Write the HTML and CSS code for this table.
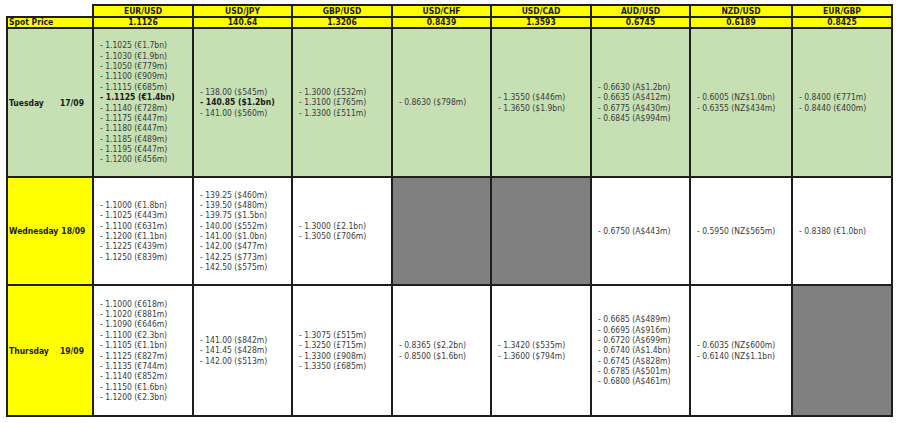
FILE: index.html
```html
<!DOCTYPE html>
<html>
<head>
<meta charset="utf-8">
<link rel="stylesheet" href="styles.css">
</head>
<body>
<table class="fx">
  <colgroup>
    <col class="c-label"><col class="c100"><col class="c99"><col class="c100"><col class="c99"><col class="c100"><col class="c99"><col class="c102"><col class="c100">
  </colgroup>
  <tr class="r-head">
    <th class="corner"></th>
    <th>EUR/USD</th><th>USD/JPY</th><th>GBP/USD</th><th>USD/CHF</th><th>USD/CAD</th><th>AUD/USD</th><th>NZD/USD</th><th>EUR/GBP</th>
  </tr>
  <tr class="r-spot">
    <th class="spot-label">Spot Price</th>
    <th>1.1126</th><th>140.64</th><th>1.3206</th><th>0.8439</th><th>1.3593</th><th>0.6745</th><th>0.6189</th><th>0.8425</th>
  </tr>
  <tr class="r-tue green">
    <td class="day"><div class="day-in"><span>Tuesday</span><span>17/09</span></div></td>
    <td><ul>
      <li>- 1.1025 (€1.7bn)</li><li>- 1.1030 (€1.9bn)</li><li>- 1.1050 (€779m)</li><li>- 1.1100 (€909m)</li><li>- 1.1115 (€685m)</li><li class="b">- 1.1125 (€1.4bn)</li><li>- 1.1140 (€728m)</li><li>- 1.1175 (€447m)</li><li>- 1.1180 (€447m)</li><li>- 1.1185 (€489m)</li><li>- 1.1195 (€447m)</li><li>- 1.1200 (€456m)</li>
    </ul></td>
    <td><ul><li>- 138.00 ($545m)</li><li class="b">- 140.85 ($1.2bn)</li><li>- 141.00 ($560m)</li></ul></td>
    <td><ul><li>- 1.3000 (£532m)</li><li>- 1.3100 (£765m)</li><li>- 1.3300 (£511m)</li></ul></td>
    <td><ul><li>- 0.8630 ($798m)</li></ul></td>
    <td><ul><li>- 1.3550 ($446m)</li><li>- 1.3650 ($1.9bn)</li></ul></td>
    <td><ul><li>- 0.6630 (A$1.2bn)</li><li>- 0.6635 (A$412m)</li><li>- 0.6775 (A$430m)</li><li>- 0.6845 (A$994m)</li></ul></td>
    <td><ul><li>- 0.6005 (NZ$1.0bn)</li><li>- 0.6355 (NZ$434m)</li></ul></td>
    <td><ul><li>- 0.8400 (€771m)</li><li>- 0.8440 (€400m)</li></ul></td>
  </tr>
  <tr class="r-wed">
    <td class="day yellow"><div class="day-in"><span>Wednesday</span><span>18/09</span></div></td>
    <td><ul><li>- 1.1000 (€1.8bn)</li><li>- 1.1025 (€443m)</li><li>- 1.1100 (€631m)</li><li>- 1.1200 (€1.1bn)</li><li>- 1.1225 (€439m)</li><li>- 1.1250 (€839m)</li></ul></td>
    <td><ul><li>- 139.25 ($460m)</li><li>- 139.50 ($480m)</li><li>- 139.75 ($1.5bn)</li><li>- 140.00 ($552m)</li><li>- 141.00 ($1.0bn)</li><li>- 142.00 ($477m)</li><li>- 142.25 ($773m)</li><li>- 142.50 ($575m)</li></ul></td>
    <td><ul><li>- 1.3000 (£2.1bn)</li><li>- 1.3050 (£706m)</li></ul></td>
    <td class="grey"></td>
    <td class="grey"></td>
    <td><ul><li>- 0.6750 (A$443m)</li></ul></td>
    <td><ul><li>- 0.5950 (NZ$565m)</li></ul></td>
    <td><ul><li>- 0.8380 (€1.0bn)</li></ul></td>
  </tr>
  <tr class="r-thu">
    <td class="day yellow"><div class="day-in"><span>Thursday</span><span>19/09</span></div></td>
    <td><ul><li>- 1.1000 (€618m)</li><li>- 1.1020 (€881m)</li><li>- 1.1090 (€646m)</li><li>- 1.1100 (€2.3bn)</li><li>- 1.1105 (€1.1bn)</li><li>- 1.1125 (€827m)</li><li>- 1.1135 (€744m)</li><li>- 1.1140 (€852m)</li><li>- 1.1150 (€1.6bn)</li><li>- 1.1200 (€2.3bn)</li></ul></td>
    <td><ul><li>- 141.00 ($842m)</li><li>- 141.45 ($428m)</li><li>- 142.00 ($513m)</li></ul></td>
    <td><ul><li>- 1.3075 (£515m)</li><li>- 1.3250 (£715m)</li><li>- 1.3300 (£908m)</li><li>- 1.3350 (£685m)</li></ul></td>
    <td><ul><li>- 0.8365 ($2.2bn)</li><li>- 0.8500 ($1.6bn)</li></ul></td>
    <td><ul><li>- 1.3420 ($535m)</li><li>- 1.3600 ($794m)</li></ul></td>
    <td><ul><li>- 0.6685 (A$489m)</li><li>- 0.6695 (A$916m)</li><li>- 0.6720 (A$699m)</li><li>- 0.6740 (A$1.4bn)</li><li>- 0.6745 (A$828m)</li><li>- 0.6785 (A$501m)</li><li>- 0.6800 (A$461m)</li></ul></td>
    <td><ul><li>- 0.6035 (NZ$600m)</li><li>- 0.6140 (NZ$1.1bn)</li></ul></td>
    <td class="grey"></td>
  </tr>
</table>
</body>
</html>
```

FILE: styles.css
```css
html, body {
  margin: 0;
  padding: 0;
  background: #ffffff;
}
body {
  padding: 4px 0 0 6px;
  font-family: "DejaVu Sans Condensed", "DejaVu Sans", sans-serif;
  font-size: 8.5px;
  color: #3c3c3c;
}
.fx {
  border-collapse: collapse;
  table-layout: fixed;
  width: 886px;
}
.c-label { width: 86px; }
.c99 { width: 99px; }
.c100 { width: 100px; }
.c102 { width: 102px; }
.fx th, .fx td {
  border: 2px solid #1e1e1e;
  padding: 0;
  vertical-align: middle;
}
.fx th {
  background: #ffff00;
  color: #1a1a1a;
  font-weight: bold;
  text-align: center;
  line-height: 9px;
}
.fx th.corner {
  background: transparent;
  border-top: hidden;
  border-left: hidden;
}
.fx th.spot-label {
  text-align: left;
  padding-left: 1px;
}
.r-head { height: 12px; }
.r-spot { height: 11px; }
.r-tue { height: 149px; }
.r-wed { height: 108px; }
.r-thu { height: 131px; }
.green td { background: #c6e0b4; }
.fx td.yellow { background: #ffff00; }
.fx td.grey { background: #808080; }
.day-in {
  display: flex;
  justify-content: space-between;
  gap: 3px;
  padding: 0 8px 0 1px;
  font-weight: bold;
  color: #1a1a1a;
}
ul {
  list-style: none;
  margin: 0;
  padding: 0 0 0 6px;
  line-height: 10.35px;
  white-space: nowrap;
}
li.b {
  font-weight: bold;
  color: #1a1a1a;
}
```
